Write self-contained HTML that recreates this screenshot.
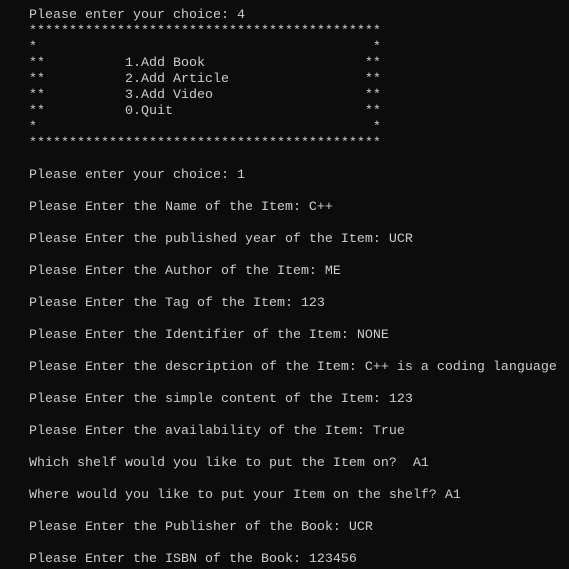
<!DOCTYPE html>
<html><head><style>
html,body{margin:0;background:#0c0c0c;width:569px;height:569px;overflow:hidden}
pre{margin:0;padding:8px 0 0 29px;font-family:"Liberation Mono",monospace;font-size:13.33px;line-height:16px;color:#cccccc;white-space:pre}
</style></head><body><pre>Please enter your choice: 4
********************************************
*                                          *
**          1.Add Book                    **
**          2.Add Article                 **
**          3.Add Video                   **
**          0.Quit                        **
*                                          *
********************************************

Please enter your choice: 1

Please Enter the Name of the Item: C++

Please Enter the published year of the Item: UCR

Please Enter the Author of the Item: ME

Please Enter the Tag of the Item: 123

Please Enter the Identifier of the Item: NONE

Please Enter the description of the Item: C++ is a coding language

Please Enter the simple content of the Item: 123

Please Enter the availability of the Item: True

Which shelf would you like to put the Item on?  A1

Where would you like to put your Item on the shelf? A1

Please Enter the Publisher of the Book: UCR

Please Enter the ISBN of the Book: 123456</pre></body></html>
